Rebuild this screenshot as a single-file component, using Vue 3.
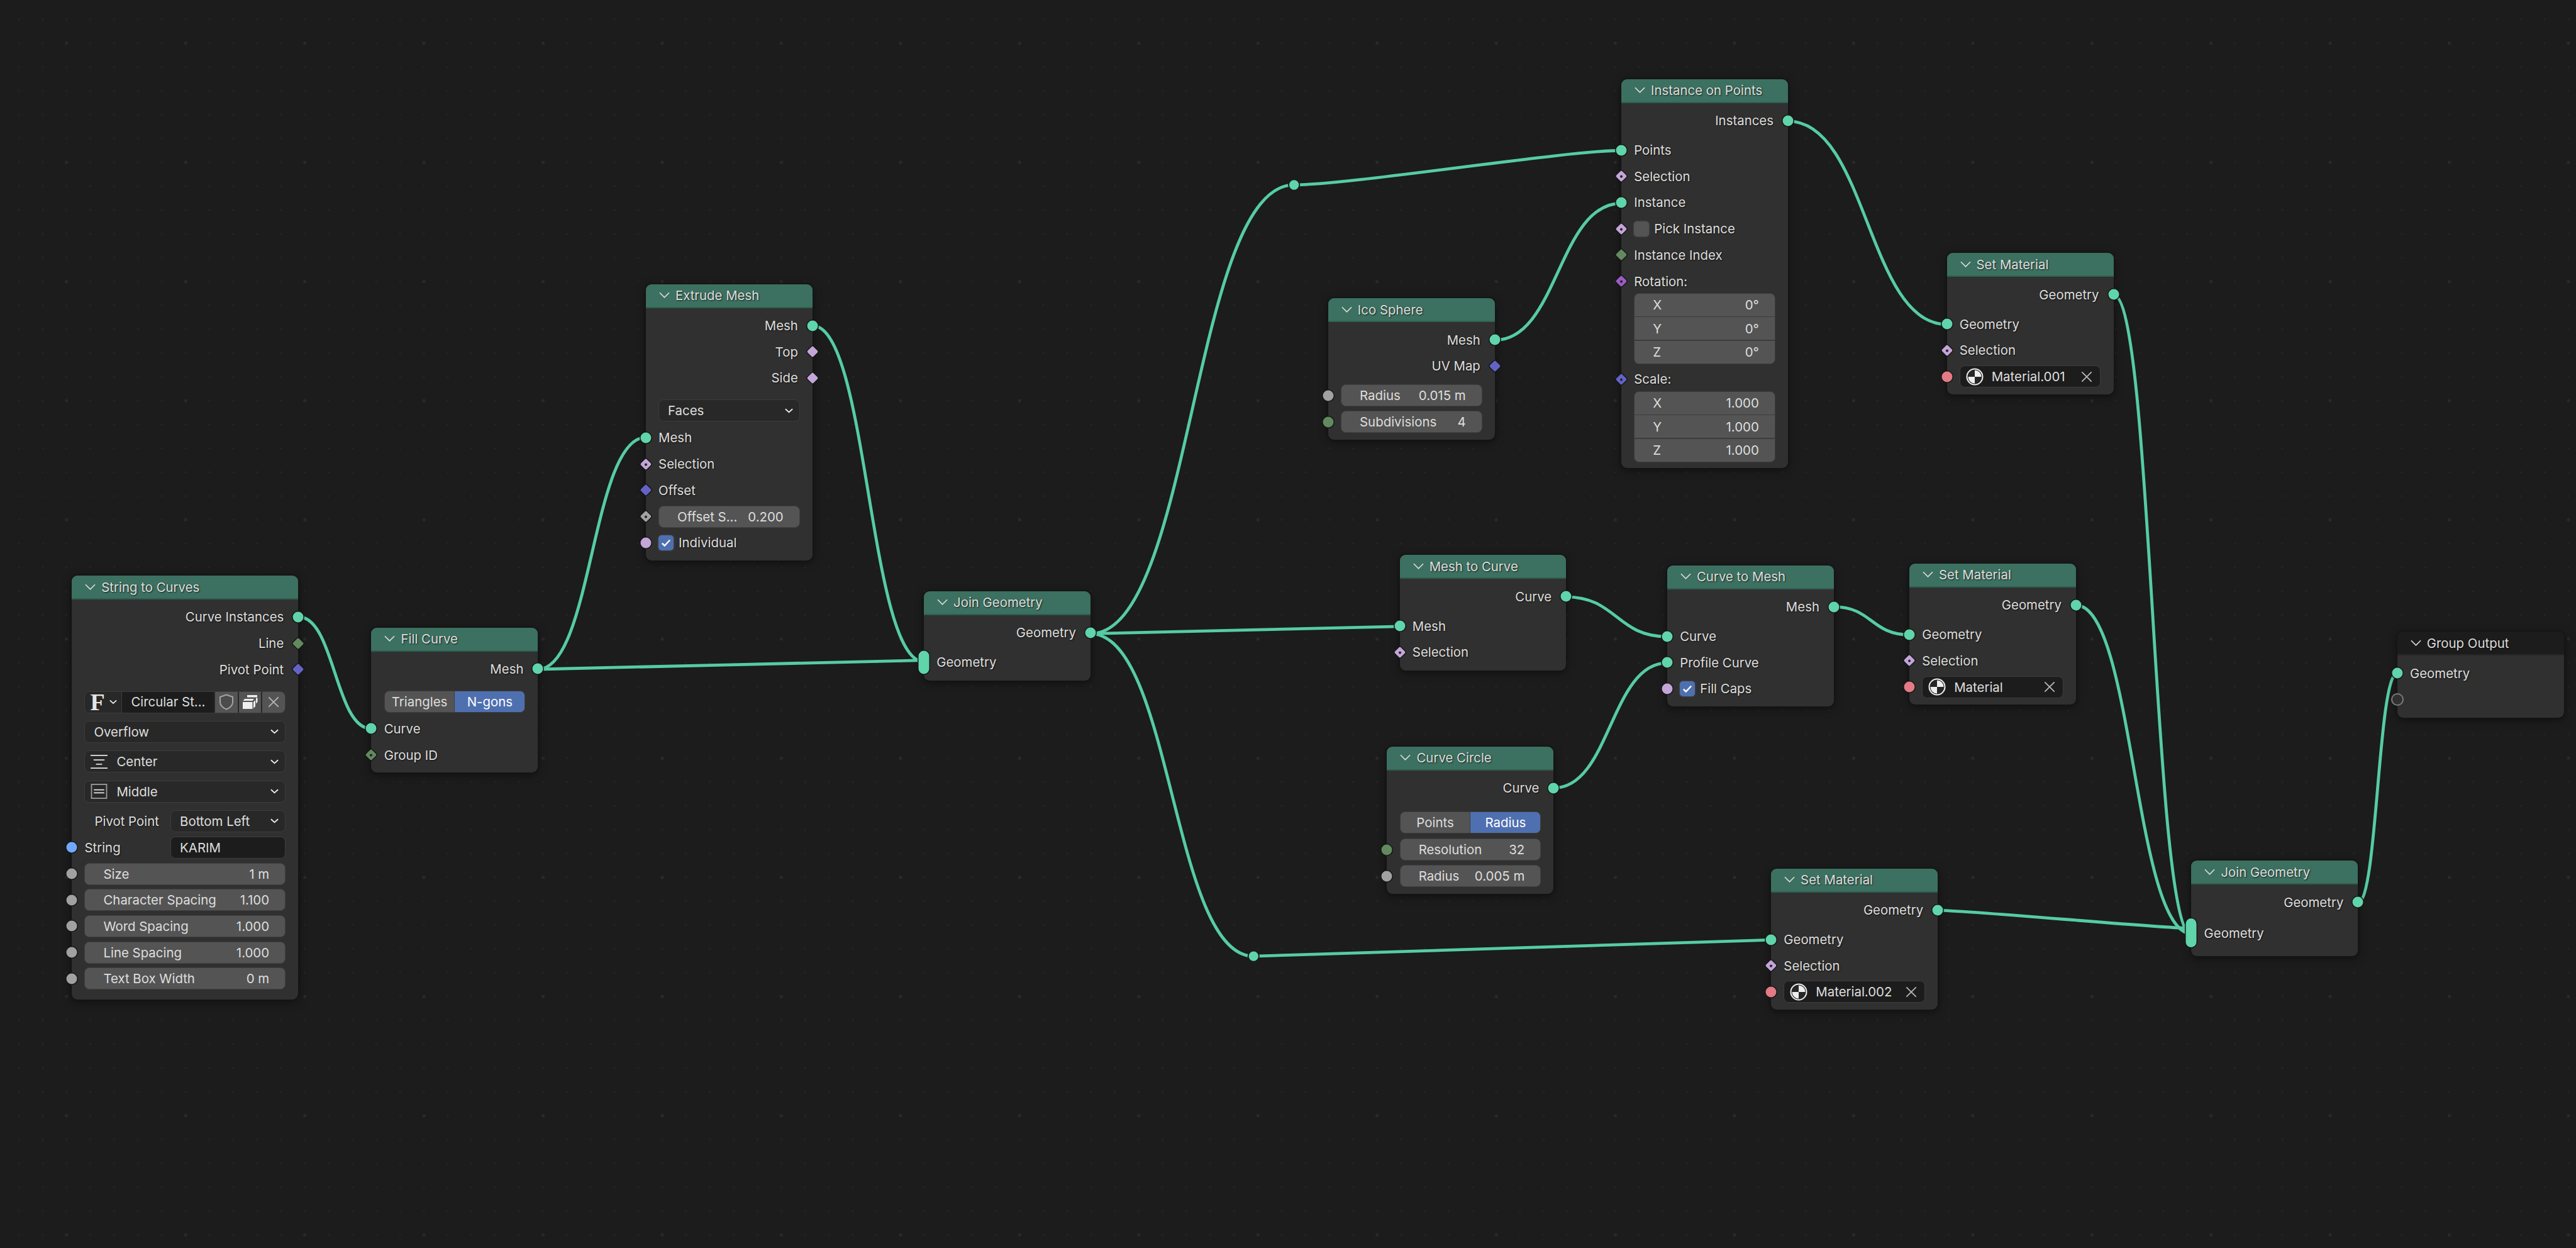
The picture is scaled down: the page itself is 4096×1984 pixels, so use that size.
<template>
  <div class="editor">
    <svg class="wires" viewBox="0 0 4266 2066">
      <defs>
        <pattern id="small-dots" patternUnits="userSpaceOnUse" width="39.46" height="39.46">
          <circle cx="31.2" cy="32" r="1.3" fill="#282828" />
        </pattern>
        <pattern id="big-dots" patternUnits="userSpaceOnUse" width="197.3" height="197.3">
          <circle cx="110.2" cy="71.5" r="2.6" fill="#2a2a2a" />
        </pattern>
      </defs>
      <rect width="4266" height="2066" fill="url(#small-dots)" />
      <rect width="4266" height="2066" fill="url(#big-dots)" />
      <path v-for="(w, i) in wires" :key="i" :d="wirePath(w)" class="wire" />
      <circle v-for="(r, i) in reroutes" :key="i" :cx="r[0]" :cy="r[1]" r="9" class="reroute" />
    </svg>

    <section v-for="n in nodes" :key="n.title + n.x" class="node" :style="boxStyle(n)">
      <header class="head" :class="{ dark: n.dark }">
        <svg class="head-chev" viewBox="0 0 18 11"><path d="M1 1l8 8 8-8" /></svg>
        <span>{{ n.title }}</span>
      </header>
      <div class="rows">
        <div v-for="(r, i) in n.rows" :key="i" class="row" :class="['row-' + r.t, r.gap]">
          <i v-if="r.s" class="sock" :class="[r.s, { right: r.t === 'out' }]"></i>

          <span v-if="r.t === 'out' || r.t === 'in'" class="label">{{ r.label }}</span>

          <div v-else-if="r.t === 'num'" class="num">
            <span>{{ r.label }}</span><span>{{ r.value }}</span>
          </div>

          <div v-else-if="r.t === 'dd'" class="menu">
            <svg v-if="r.icon === 'center'" class="align" viewBox="0 0 28 24">
              <path d="M0 1.500h28M5 9h18M9 16h10M0 22.500h28" />
            </svg>
            <svg v-if="r.icon === 'middle'" class="align" viewBox="0 0 28 26">
              <rect x="1" y="1" width="26" height="24" class="frame" />
              <path d="M5 10.500h18M5 15.500h18" />
            </svg>
            <span>{{ r.label }}</span>
            <svg class="chev" viewBox="0 0 14 8"><path d="M1 1l6 5.500L13 1" /></svg>
          </div>

          <div v-else-if="r.t === 'font'" class="fontbar">
            <span class="f-pick">
              <span class="f-glyph">F</span>
              <svg class="chev" viewBox="0 0 14 8"><path d="M1 1l6 5.500L13 1" /></svg>
            </span>
            <span class="f-name">Circular St...</span>
            <span class="f-btn">
              <svg viewBox="0 0 24 26"><path class="shield" d="M12 1.500l10 3.500v8c0 5.500-5 9.500-10 11.500C7 22.500 2 18.500 2 13V5z" /></svg>
            </span>
            <span class="f-btn">
              <svg viewBox="0 0 26 24">
                <path class="solid" d="M8 1h16v3.500H8zM4 7h15l-2.500 3H1.500zM1 12h15.500v11H1zM18 12l3-3v10l-3 3zM22 5.500h2.500V12L22 14.500z" />
              </svg>
            </span>
            <span class="f-btn last">
              <svg viewBox="0 0 20 20"><path class="cross" d="M3 3l14 14M17 3L3 17" /></svg>
            </span>
          </div>

          <template v-else-if="r.t === 'split'">
            <span class="split-label">{{ r.label }}</span>
            <div class="menu narrow">
              <span>{{ r.value }}</span>
              <svg class="chev" viewBox="0 0 14 8"><path d="M1 1l6 5.500L13 1" /></svg>
            </div>
          </template>

          <template v-else-if="r.t === 'string'">
            <span class="label grow">{{ r.label }}</span>
            <div class="textfield">{{ r.value }}</div>
          </template>

          <div v-else-if="r.t === 'toggle'" class="toggle">
            <span>{{ r.a }}</span><span class="on">{{ r.b }}</span>
          </div>

          <template v-else-if="r.t === 'check'">
            <span class="box" :class="{ checked: r.on }">
              <svg v-if="r.on" viewBox="0 0 16 16"><path d="M2.500 8.500l3.500 3.500 7.500-8" /></svg>
            </span>
            <span class="check-label">{{ r.label }}</span>
          </template>

          <div v-else-if="r.t === 'mat'" class="mat">
            <svg class="ball" viewBox="0 0 28 28">
              <circle cx="14" cy="14" r="12.500" class="ball-ring" />
              <path class="ball-fill" d="M14 3.500A10.500 10.500 0 0 1 24.500 14H14zM14 14v10.500A10.500 10.500 0 0 1 3.500 14z" />
            </svg>
            <span class="mat-name">{{ r.label }}</span>
            <svg class="mat-x" viewBox="0 0 20 20"><path class="cross" d="M3 3l14 14M17 3L3 17" /></svg>
          </div>

          <div v-else-if="r.t === 'vec'" class="vec">
            <div v-for="(c, j) in r.items" :key="j" class="vec-cell">
              <span>{{ c[0] }}</span><span>{{ c[1] }}</span>
            </div>
          </div>
        </div>
      </div>
    </section>
  </div>
</template>

<script setup>
const scale = 4096 / 4266

const boxStyle = (n) => ({
  left: n.x * scale + 'px',
  top: n.y * scale + 'px',
  width: n.w * scale + 'px',
  height: n.h * scale + 'px'
})

// same handle rule as the node editor: shallow links get shorter handles
const wirePath = ([x0, y0, x1, y1]) => {
  const dx = Math.abs(x1 - x0)
  const slope = Math.abs(y1 - y0) / dx
  const h = 0.5 * dx * Math.min(1, slope * 3.25)
  return `M${x0} ${y0}C${x0 + h} ${y0} ${x1 - h} ${y1} ${x1} ${y1}`
}

const out = (label, s, gap) => ({ t: 'out', label, s, gap })
const inp = (label, s, gap) => ({ t: 'in', label, s, gap })
const num = (label, value, s, gap) => ({ t: 'num', label, value, s, gap })
const geometryRows = (name) => [
  out('Geometry', 'geo'),
  inp('Geometry', 'geo', 'g1'),
  inp('Selection', 'lilac dia dot'),
  { t: 'mat', label: name, s: 'red' }
]

const nodes = [
  {
    title: 'String to Curves', x: 119, y: 953, w: 375, h: 702,
    rows: [
      out('Curve Instances', 'geo'),
      out('Line', 'green dia'),
      out('Pivot Point', 'blue dia'),
      { t: 'font', gap: 'g2' },
      { t: 'dd', label: 'Overflow' },
      { t: 'dd', label: 'Center', icon: 'center' },
      { t: 'dd', label: 'Middle', icon: 'middle' },
      { t: 'split', label: 'Pivot Point', value: 'Bottom Left' },
      { t: 'string', label: 'String', value: 'KARIM', s: 'sky' },
      num('Size', '1 m', 'grey'),
      num('Character Spacing', '1.100', 'grey'),
      num('Word Spacing', '1.000', 'grey'),
      num('Line Spacing', '1.000', 'grey'),
      num('Text Box Width', '0 m', 'grey')
    ]
  },
  {
    title: 'Fill Curve', x: 615, y: 1039, w: 276, h: 240,
    rows: [
      out('Mesh', 'geo'),
      { t: 'toggle', a: 'Triangles', b: 'N-gons', gap: 'g2' },
      inp('Curve', 'geo'),
      inp('Group ID', 'green dia dot')
    ]
  },
  {
    title: 'Extrude Mesh', x: 1069.5, y: 470.5, w: 276, h: 457,
    rows: [
      out('Mesh', 'geo'),
      out('Top', 'lilac dia'),
      out('Side', 'lilac dia'),
      { t: 'dd', label: 'Faces', gap: 'g2' },
      inp('Mesh', 'geo'),
      inp('Selection', 'lilac dia dot'),
      inp('Offset', 'blue dia'),
      num('Offset S...', '0.200', 'grey dia dot'),
      { t: 'check', label: 'Individual', on: true, s: 'lilac' }
    ]
  },
  {
    title: 'Join Geometry', x: 1530, y: 979, w: 276, h: 148,
    rows: [out('Geometry', 'geo'), inp('Geometry', 'geo multi', 'g1')]
  },
  {
    title: 'Ico Sphere', x: 2199.5, y: 494, w: 276, h: 234,
    rows: [
      out('Mesh', 'geo'),
      out('UV Map', 'blue dia'),
      num('Radius', '0.015 m', 'grey', 'g1'),
      num('Subdivisions', '4', 'green')
    ]
  },
  {
    title: 'Instance on Points', x: 2685, y: 131, w: 276, h: 644,
    rows: [
      out('Instances', 'geo'),
      inp('Points', 'geo', 'g1'),
      inp('Selection', 'lilac dia dot'),
      inp('Instance', 'geo'),
      { t: 'check', label: 'Pick Instance', on: false, s: 'lilac dia dot' },
      inp('Instance Index', 'green dia'),
      inp('Rotation:', 'purple dia dot'),
      { t: 'vec', items: [['X', '0°'], ['Y', '0°'], ['Z', '0°']] },
      inp('Scale:', 'blue dia dot'),
      { t: 'vec', items: [['X', '1.000'], ['Y', '1.000'], ['Z', '1.000']] }
    ]
  },
  { title: 'Set Material', x: 3224, y: 419, w: 276, h: 234, rows: geometryRows('Material.001') },
  {
    title: 'Mesh to Curve', x: 2318, y: 919, w: 275.5, h: 191,
    rows: [out('Curve', 'geo'), inp('Mesh', 'geo', 'g1'), inp('Selection', 'lilac dia dot')]
  },
  {
    title: 'Curve to Mesh', x: 2761, y: 936, w: 276, h: 234,
    rows: [
      out('Mesh', 'geo'),
      inp('Curve', 'geo', 'g1'),
      inp('Profile Curve', 'geo'),
      { t: 'check', label: 'Fill Caps', on: true, s: 'lilac' }
    ]
  },
  { title: 'Set Material', x: 3162, y: 933, w: 276, h: 234, rows: geometryRows('Material') },
  {
    title: 'Curve Circle', x: 2297, y: 1236, w: 276, h: 244,
    rows: [
      out('Curve', 'geo'),
      { t: 'toggle', a: 'Points', b: 'Radius', gap: 'g3' },
      num('Resolution', '32', 'green'),
      num('Radius', '0.005 m', 'grey')
    ]
  },
  { title: 'Set Material', x: 2933, y: 1438, w: 276, h: 234, rows: geometryRows('Material.002') },
  {
    title: 'Join Geometry', x: 3629, y: 1425, w: 276, h: 158,
    rows: [out('Geometry', 'geo'), inp('Geometry', 'geo multi tall-pill', 'g2')]
  },
  {
    title: 'Group Output', x: 3970, y: 1046, w: 276, h: 142, dark: true,
    rows: [inp('Geometry', 'geo'), inp('', 'ring')]
  }
]

const wires = [
  [494, 1021, 615, 1206.5],
  [891, 1108, 1069.5, 724],
  [891, 1108, 1531, 1093],
  [1345.5, 539, 1531, 1096],
  [1806, 1049, 2143, 306],
  [2143, 306, 2685, 249],
  [1806, 1049, 2318, 1037],
  [1806, 1049, 2076, 1583],
  [2076, 1583, 2933, 1556],
  [2475.5, 563, 2685, 336.5],
  [2593, 988, 2761, 1054],
  [2573, 1304.5, 2761, 1097.5],
  [2961, 200.5, 3224, 537],
  [3037, 1004.5, 3162, 1051],
  [3500, 488, 3630, 1549],
  [3438, 1002, 3630, 1546],
  [3209, 1507, 3630, 1537],
  [3905, 1494, 3970, 1115]
]

const reroutes = [
  [2143, 306],
  [2076, 1583]
]
</script>

<style scoped>
.editor {
  position: relative;
  width: 4096px;
  height: 1984px;
  overflow: hidden;
  background: #1c1c1c;
  font-family: Inter, "Liberation Sans", sans-serif;
  font-size: 20.4px;
  color: #dedede;
}

.wires {
  position: absolute;
  left: 0;
  top: 0;
  width: 100%;
  height: 100%;
}

.wire {
  fill: none;
  stroke: #56cca4;
  stroke-width: 5;
}

.reroute {
  fill: #5fd4ab;
  stroke: #1c1c1c;
  stroke-width: 2;
}

.node {
  position: absolute;
  box-sizing: border-box;
  background: #303030;
  border-radius: 9px;
  box-shadow: 0 0 0 1.5px #141414, 0 3px 14px rgba(0, 0, 0, 0.5);
}

.head {
  display: flex;
  align-items: center;
  height: 38px;
  padding-left: 21px;
  background: #3c7060;
  border-bottom: 2px solid #2f5f50;
  box-sizing: border-box;
  border-radius: 9px 9px 0 0;
  text-shadow: 1px 1px 2px rgba(0, 0, 0, 0.75);
}

.head.dark {
  background: #1c1c1c;
  border-bottom-color: #272727;
}

.head-chev {
  width: 17px;
  height: 11px;
  margin-right: 9px;
  fill: none;
  stroke: #dcdcdc;
  stroke-width: 1.8;
}

.rows {
  padding-top: 7px;
}

.row {
  position: relative;
  display: flex;
  align-items: center;
  height: 41.7px;
  padding: 0 20.2px;
  box-sizing: border-box;
}

.row-out {
  justify-content: flex-end;
  padding-right: 23px;
}

.row-font,
.row-dd,
.row-toggle,
.row-split {
  height: 47.3px;
}

.row-dd + .row-in,
.row-toggle + .row-in,
.row-toggle + .row-num {
  margin-top: -1.4px;
}

.row-split + .row-string {
  margin-top: -2.4px;
}

.row-vec {
  height: auto;
  margin: -2px 0 3px;
}

.g1 {
  margin-top: 5.3px;
}

.g2 {
  margin-top: 7.4px;
}

.g3 {
  margin-top: 10.8px;
}

.label {
  text-shadow: 1px 1px 2px rgba(0, 0, 0, 0.7);
  white-space: nowrap;
}

.grow {
  flex: 1;
}

/* sockets */
.sock {
  position: absolute;
  left: 0;
  top: 50%;
  width: 17px;
  height: 17px;
  border-radius: 50%;
  transform: translate(-50%, -50%);
  box-shadow: 0 0 0 1.5px #161616;
  z-index: 2;
}

.sock.right {
  left: 100%;
}

.sock.dia {
  width: 13px;
  height: 13px;
  border-radius: 2px;
  transform: translate(-50%, -50%) rotate(45deg);
}

.sock.dot::after {
  content: "";
  position: absolute;
  left: 4.5px;
  top: 4.5px;
  width: 4px;
  height: 4px;
  border-radius: 50%;
  background: #222;
}

.sock.multi {
  width: 17px;
  height: 37px;
  border-radius: 8.5px;
}

.sock.tall-pill {
  height: 46px;
}

.sock.ring {
  background: #303030;
  box-shadow: 0 0 0 2px #7c7c7c;
  width: 16px;
  height: 16px;
}

.geo { background: #60d4ab; }
.green { background: #63895f; }
.blue { background: #6363c7; }
.lilac { background: #c4a5d8; }
.grey { background: #a1a1a1; }
.sky { background: #70a8ff; }
.red { background: #e37a85; }
.purple { background: #9a5cc4; }

/* widgets */
.num,
.menu,
.textfield,
.mat,
.toggle,
.fontbar {
  display: flex;
  align-items: center;
  width: 100%;
  height: 35px;
  box-sizing: border-box;
  border: 1.5px solid #3c3c3c;
  border-radius: 8px;
  white-space: nowrap;
}

.num {
  justify-content: space-between;
  padding: 0 25px 0 29px;
  background: #545454;
  border-color: #404040;
}

.menu {
  padding: 0 10px 0 14px;
  background: #282828;
}

.menu .chev {
  margin-left: auto;
}

.chev {
  width: 13px;
  height: 8px;
  flex: none;
  fill: none;
  stroke: #f0f0f0;
  stroke-width: 2;
}

.align {
  width: 27px;
  height: 24px;
  margin: 0 14px 0 -5px;
  flex: none;
  fill: none;
  stroke: #e4e4e4;
  stroke-width: 2;
}

.align .frame {
  stroke: #9a9a9a;
}

.split-label {
  flex: 1;
  padding-left: 16px;
  text-shadow: 1px 1px 2px rgba(0, 0, 0, 0.7);
}

.narrow {
  width: 183px;
  flex: none;
}

.textfield {
  width: 183px;
  flex: none;
  padding-left: 14px;
  background: #1c1c1c;
}

.toggle {
  overflow: hidden;
  background: #545454;
}

.toggle span {
  flex: 1;
  height: 100%;
  display: flex;
  align-items: center;
  justify-content: center;
  border-right: 1.5px solid #3c3c3c;
}

.toggle .on {
  background: #4f70b0;
  color: #fff;
  border-right: 0;
}

.box {
  width: 24px;
  height: 24px;
  flex: none;
  display: flex;
  align-items: center;
  justify-content: center;
  box-sizing: border-box;
  background: #545454;
  border-radius: 5px;
  box-shadow: 0 0 0 1.5px #3c3c3c;
}

.box.checked {
  background: #4f70b0;
}

.box svg {
  width: 18px;
  height: 18px;
  fill: none;
  stroke: #fff;
  stroke-width: 2.2;
}

.check-label {
  margin-left: 8px;
  text-shadow: 1px 1px 2px rgba(0, 0, 0, 0.7);
}

.mat {
  padding: 0 10px 0 9px;
  background: #1c1c1c;
}

.ball {
  width: 28px;
  height: 28px;
  flex: none;
}

.ball-ring {
  fill: #262626;
  stroke: #eee;
  stroke-width: 2;
}

.ball-fill {
  fill: #eee;
}

.mat-name {
  margin-left: 13px;
}

.mat-x {
  width: 22px;
  height: 22px;
  margin-left: auto;
  flex: none;
}

.cross {
  fill: none;
  stroke: #b8b8b8;
  stroke-width: 1.6;
}

.vec {
  width: 100%;
  overflow: hidden;
  border: 1.5px solid #3c3c3c;
  border-radius: 8px;
  background: #3c3c3c;
}

.vec-cell {
  display: flex;
  justify-content: space-between;
  align-items: center;
  height: 36px;
  padding: 0 25px 0 29px;
  background: #545454;
}

.vec-cell + .vec-cell {
  margin-top: 1.5px;
}

.fontbar {
  background: #282828;
}

.f-pick {
  display: flex;
  align-items: center;
  width: 59px;
  flex: none;
  height: 100%;
  padding-left: 8px;
  box-sizing: border-box;
  border-right: 1.5px solid #3c3c3c;
  border-radius: 7px 0 0 7px;
}

.f-glyph {
  width: 31px;
  flex: none;
  font-family: "Liberation Serif", serif;
  font-weight: 700;
  font-size: 38px;
  line-height: 38px;
  color: #e6e6e6;
}

.f-pick .chev {
  width: 12px;
}

.f-name {
  width: 146px;
  flex: none;
  height: 100%;
  line-height: 32px;
  padding-left: 14px;
  box-sizing: border-box;
  background: #1c1c1c;
}

.f-btn {
  display: flex;
  align-items: center;
  justify-content: center;
  width: 35.5px;
  height: 100%;
  margin-left: 2px;
  flex: none;
  background: #545454;
}

.f-btn.last {
  border-radius: 0 7px 7px 0;
}

.f-btn svg {
  width: 26px;
  height: 26px;
}

.f-btn.last svg {
  width: 22px;
  height: 22px;
}

.shield {
  fill: #4c4c4c;
  stroke: #a4a4a4;
  stroke-width: 2;
}

.solid {
  fill: #efefef;
}
</style>

<style>
html,
body {
  margin: 0;
  overflow: hidden;
  background: #1c1c1c;
}
</style>
